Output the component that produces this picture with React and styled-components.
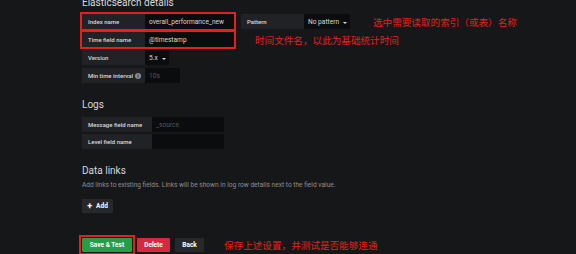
import React from "react";
import styled, { createGlobalStyle } from "styled-components";

const Global = createGlobalStyle`
  html, body { margin: 0; padding: 0; background: #161719; }
  body { font-family: Roboto, "Liberation Sans", "Noto Sans CJK SC", sans-serif; color: #d8d9da; overflow: hidden; }
`;

const Page = styled.div`
  width: 576px;
  height: 254px;
  box-sizing: border-box;
  padding-left: 82px;
  background: #161719;
  display: flex;
  flex-direction: column;
`;

const Heading = styled.h3`
  margin: ${p => p.$mt}px 0 0 0;
  font-size: 10px;
  line-height: ${p => p.$lh}px;
  font-weight: 400;
  color: #d8d9da;
`;

const Rows = styled.div`
  display: flex;
  flex-direction: column;
  gap: ${p => p.$gap}px;
  margin-top: ${p => p.$mt}px;
`;

const Row = styled.div`
  display: flex;
  align-items: center;
  height: 15px;
`;

const Field = styled.div`
  display: flex;
  height: 15px;
  margin-left: ${p => p.$ml || 0}px;
  outline: ${p => (p.$marked ? "2px solid #e3201b" : "none")};
`;

const Label = styled.div`
  width: ${p => p.$w}px;
  box-sizing: border-box;
  background: #202226;
  display: flex;
  align-items: center;
  justify-content: space-between;
  padding: 0 4px 0 6px;
  font-size: 6px;
  font-weight: 500;
  color: #d8d9da;
  white-space: nowrap;
`;

const Input = styled.div`
  width: ${p => p.$w}px;
  box-sizing: border-box;
  background: #0b0c0e;
  display: flex;
  align-items: center;
  padding: 0 4px;
  font-size: 6.6px;
  color: ${p => (p.$placeholder ? "#55575a" : "#d8d9da")};
  white-space: nowrap;
  overflow: hidden;
`;

const Caret = styled.span`
  display: inline-block;
  width: 0;
  height: 0;
  border-left: 2.5px solid transparent;
  border-right: 2.5px solid transparent;
  border-top: 2.5px solid #d8d9da;
  margin-left: 4px;
  margin-top: 2px;
`;

const Info = styled.span`
  flex: none;
  width: 6px;
  height: 6px;
  border-radius: 50%;
  background: #8e8e8e;
  color: #202226;
  font-size: 5px;
  font-weight: 700;
  line-height: 6px;
  text-align: center;
`;

const Note = styled.span`
  margin-left: ${p => p.$ml}px;
  font-family: "Noto Sans CJK SC", sans-serif;
  font-size: 9.6px;
  color: #e3201b;
  white-space: nowrap;
  line-height: 12px;
`;

const Desc = styled.p`
  margin: 3px 0 0 0;
  font-size: 6.6px;
  line-height: 10px;
  color: #8e8e8e;
`;

const Button = styled.button`
  height: 14px;
  width: ${p => p.$w}px;
  border: none;
  border-radius: 1px;
  padding: 0;
  font-family: inherit;
  font-size: 6.5px;
  font-weight: 700;
  color: #ffffff;
  background: ${p => p.$bg};
  display: inline-flex;
  align-items: center;
  justify-content: center;
  gap: 4px;
`;

const Plus = styled.span`
  font-size: 9px;
  line-height: 9px;
`;

const AddWrap = styled.div`
  display: flex;
  margin-top: 9px;
`;

const ActionRow = styled.div`
  display: flex;
  align-items: center;
  gap: 5px;
  margin-top: 25px;
`;

const Marked = styled.span`
  display: inline-flex;
  outline: 2px solid #e3201b;
  outline-offset: 1px;
`;

export default function App() {
  return (
    <>
      <Global />
      <Page>
        <Heading $mt={-2} $lh={10}>Elasticsearch details</Heading>
        <Rows $gap={3} $mt={6}>
          <Row>
            <Field $marked>
              <Label $w={63}>Index name</Label>
              <Input $w={89}>overall_performance_new</Input>
            </Field>
            <Field $ml={7}>
              <Label $w={63}>Pattern</Label>
              <Input $w={46}>No pattern<Caret /></Input>
            </Field>
            <Note $ml={23}>选中需要读取的索引（或表）名称</Note>
          </Row>
          <Row>
            <Field $marked>
              <Label $w={63}>Time field name</Label>
              <Input $w={89}>@timestamp</Input>
            </Field>
            <Note $ml={21}>时间文件名，以此为基础统计时间</Note>
          </Row>
          <Row>
            <Field>
              <Label $w={63}>Version</Label>
              <Input $w={24}>5.x<Caret /></Input>
            </Field>
          </Row>
          <Row>
            <Field>
              <Label $w={63}>Min time interval<Info>i</Info></Label>
              <Input $w={35} $placeholder>10s</Input>
            </Field>
          </Row>
        </Rows>

        <Heading $mt={16} $lh={12}>Logs</Heading>
        <Rows $gap={2} $mt={6}>
          <Row>
            <Field>
              <Label $w={70}>Message field name</Label>
              <Input $w={72} $placeholder>_source</Input>
            </Field>
          </Row>
          <Row>
            <Field>
              <Label $w={70}>Level field name</Label>
              <Input $w={72} />
            </Field>
          </Row>
        </Rows>

        <Heading $mt={16} $lh={12}>Data links</Heading>
        <Desc>Add links to existing fields. Links will be shown in log row details next to the field value.</Desc>
        <AddWrap>
          <Button $w={31} $bg="#26282b">
            <Plus>+</Plus>Add
          </Button>
        </AddWrap>

        <ActionRow>
          <Marked>
            <Button $w={50} $bg="#299c46">Save &amp; Test</Button>
          </Marked>
          <Button $w={33} $bg="#d6283e">Delete</Button>
          <Button $w={29} $bg="#26282b">Back</Button>
          <Note $ml={15}>保存上述设置，并测试是否能够连通</Note>
        </ActionRow>
      </Page>
    </>
  );
}
